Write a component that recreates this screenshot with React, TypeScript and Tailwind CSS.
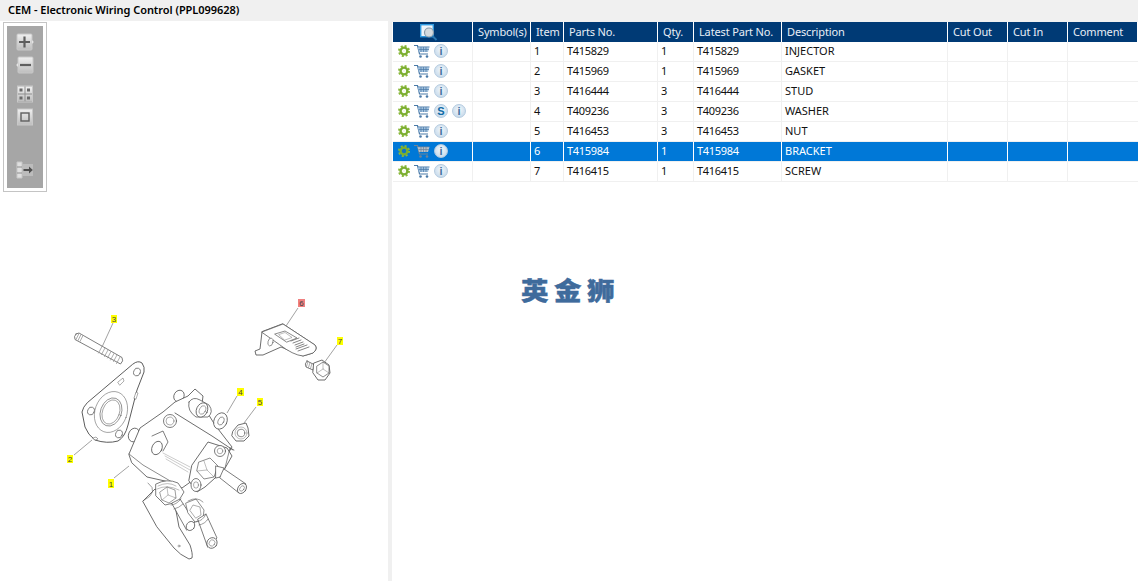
const parts = [
  { item: "1", no: "T415829", qty: "1", latest: "T415829", desc: "INJECTOR" },
  { item: "2", no: "T415969", qty: "1", latest: "T415969", desc: "GASKET" },
  { item: "3", no: "T416444", qty: "3", latest: "T416444", desc: "STUD" },
  { item: "4", no: "T409236", qty: "3", latest: "T409236", desc: "WASHER", supersede: true },
  { item: "5", no: "T416453", qty: "3", latest: "T416453", desc: "NUT" },
  { item: "6", no: "T415984", qty: "1", latest: "T415984", desc: "BRACKET", selected: true },
  { item: "7", no: "T416415", qty: "1", latest: "T416415", desc: "SCREW" },
];

const headers = ["Symbol(s)", "Item", "Parts No.", "Qty.", "Latest Part No.", "Description", "Cut Out", "Cut In", "Comment"];

function Gear({ selected }: { selected?: boolean }) {
  return (
    <svg width="12" height="12" viewBox="0 0 12 12" className="shrink-0">
      <circle cx="6" cy="6" r="5" fill="none" stroke="#8ab83a" strokeWidth="2" strokeDasharray="2 1.93" />
      <circle cx="6" cy="6" r="3.4" fill="none" stroke="#7cae30" strokeWidth="2.4" />
      <circle cx="6" cy="6" r="1.6" fill={selected ? "#1c6fb8" : "#f4f8e8"} />
    </svg>
  );
}

function Cart({ selected }: { selected?: boolean }) {
  const c = selected ? "#6f8396" : "#4a7aa8";
  return (
    <svg width="16" height="15" viewBox="0 0 16 15" className="shrink-0">
      <path d="M0 1.5h3.5l2 8.5h8.5" fill="none" stroke={c} strokeWidth="1.2" />
      <path d="M3.5 3H15.5L14 8H5z" fill={selected ? "#b5c0ca" : "#a3c2de"} />
      <path d="M3.5 2.8H15.5M4.5 5.5H15M7 3v5M9.500 3v5M12 3v5" fill="none" stroke={c} strokeWidth="0.7" />
      <circle cx="6.5" cy="12.5" r="1.3" fill={c} />
      <circle cx="13" cy="12.5" r="1.3" fill={c} />
    </svg>
  );
}

function Badge({ letter }: { letter: "i" | "S" }) {
  return (
    <span
      className={`flex h-[14px] w-[14px] shrink-0 items-center justify-center rounded-full border border-[#b4cbe0] bg-[radial-gradient(circle_at_50%_40%,#f2f7fb,#bcd3e7)] font-['Liberation_Sans',sans-serif] text-[11px] leading-none font-bold ${
        letter === "S" ? "text-[#0f6aa6]" : "text-[#40709f]"
      }`}
    >
      {letter}
    </span>
  );
}

function ZoomButton({ children, className }: { children: React.ReactNode; className?: string }) {
  return (
    <svg width="18" height="18" viewBox="0 0 18 18" className={className}>
      <defs>
        <linearGradient id="btn" x1="0" y1="0" x2="0" y2="1">
          <stop offset="0" stopColor="#f0f0f0" />
          <stop offset="1" stopColor="#bdbdbd" />
        </linearGradient>
      </defs>
      {children}
    </svg>
  );
}

function Toolbar() {
  return (
    <div className="mt-px ml-[3px] h-[170px] w-[44px] border border-[#c4c4c4] bg-white p-[3px]">
      <div className="flex h-full flex-col items-center bg-[#a6a6a6] pt-[7px]">
        <ZoomButton>
          <rect x="1" y="1" width="15" height="16" rx="1" fill="url(#btn)" stroke="#c8c8c8" />
          <path d="M16 7l1.8 2-1.8 2z" fill="#e4e4e4" />
          <path d="M8.5 3.500v11M3 9h11" stroke="#5f5f5f" strokeWidth="2.200" />
        </ZoomButton>
        <ZoomButton className="mt-[5px]">
          <rect x="2" y="1" width="15" height="16" rx="1" fill="url(#btn)" stroke="#c8c8c8" />
          <path d="M2 7L0.2 9 2 11z" fill="#e4e4e4" />
          <path d="M4 9h11" stroke="#5f5f5f" strokeWidth="2.200" />
        </ZoomButton>
        <ZoomButton className="mt-[11px]">
          <rect x="1.5" y="1" width="15" height="16" fill="#8e8e8e" stroke="#c8c8c8" />
          <path d="M2 1.500h6.500v7h-6.500zM9.500 1.500h6.500v7h-6.500zM2 9.500h6.500v7h-6.500zM9.500 9.500h6.500v7h-6.500z" fill="url(#btn)" />
          <path d="M3.500 3.500h3v3h-3zM11 3.500h3v3h-3zM3.500 11.500h3v3h-3zM11 11.500h3v3h-3z" fill="#6a6a6a" />
        </ZoomButton>
        <ZoomButton className="mt-[5px]">
          <rect x="1.5" y="1" width="15" height="16" fill="url(#btn)" stroke="#c8c8c8" />
          <rect x="5" y="5" width="8" height="8" fill="none" stroke="#5f5f5f" strokeWidth="1.4" />
        </ZoomButton>
        <ZoomButton className="mt-[35px]">
          <path d="M1 1h5v16H1z" fill="#e0e0e0" stroke="#c8c8c8" />
          <path d="M1 6h5M1 12h5" stroke="#8e8e8e" />
          <path d="M6 3h11v12H6z" fill="#bcbcbc" />
          <path d="M7.500 9h6" stroke="#4f4f4f" strokeWidth="2" />
          <path d="M13 5.500l3.800 3.500-3.800 3.500z" fill="#4f4f4f" />
        </ZoomButton>
      </div>
    </div>
  );
}

function Callout({ x, y, w, h, text, fill, x2, y2, x3, y3 }: { x: number; y: number; w: number; h: number; text: string; fill: string; x2: number; y2: number; x3: number; y3: number }) {
  return (
    <g>
      <path d={`M${x2} ${y2}L${x3} ${y3}`} stroke="#8a8a8a" strokeWidth="0.8" />
      <rect x={x} y={y} width={w} height={h} fill={fill} />
      <text x={x + w / 2} y={y + h - 1.500} textAnchor="middle" fontSize="8" fill="#444" fontFamily="'Liberation Sans', sans-serif">
        {text}
      </text>
    </g>
  );
}

function Drawing() {
  return (
    <svg width="388" height="290" viewBox="0 291 388 290" className="mt-auto block">
      <g fill="#fff" stroke="#5c5c5c" strokeWidth="0.8" strokeLinejoin="round" strokeLinecap="round">
        {/* stud */}
        <path d="M76 334L79 333L122 357.500Q124 361 120.500 364L75 339.500Q73.500 336.500 76 334Z" />
        <path d="M79 333.500l-3 6M81 334.500l-3 6M83 335.500l-3 6M102 346.500l-3.500 6.500M105 348l-3.500 6.500M108 350l-3.500 6.500M111 351.500l-3.500 6.500M114 353.500l-3.500 6.500M117 355l-3.500 6.500M120 357l-3.500 6.500" strokeWidth="0.8" stroke="#999" />
        {/* gasket */}
        <path d="M133 364Q138 360 142 363Q145 367 144 372L137 390L128 425Q125 437 118 441Q107 444 95 440Q88 435 85 427L82 412Q83 407 87 403Z" strokeWidth="1" />
        <ellipse cx="137" cy="372" rx="3.300" ry="4" transform="rotate(20 137 372)" strokeWidth="0.7" />
        <ellipse cx="91" cy="411" rx="3.300" ry="4" transform="rotate(20 91 411)" strokeWidth="0.7" />
        <ellipse cx="119" cy="434" rx="3.300" ry="4" transform="rotate(20 119 434)" strokeWidth="0.7" />
        <ellipse cx="111" cy="412" rx="16" ry="21" transform="rotate(20 111 412)" strokeWidth="0.5" />
        <ellipse cx="111" cy="412" rx="10.500" ry="14.500" transform="rotate(20 111 412)" strokeWidth="0.6" />
        <ellipse cx="111" cy="412" rx="8.500" ry="12.500" transform="rotate(20 111 412)" strokeWidth="0.5" />
        <path d="M118 382l5-4 1 3-4 4zM134 398l2-6 2 1-2 6zM93 438l3-1 2 2-3 1z" strokeWidth="0.5" />

        {/* injector body */}
        <ellipse cx="134" cy="435" rx="5.500" ry="7" transform="rotate(20 134 435)" />
        <ellipse cx="179" cy="396" rx="5" ry="6" transform="rotate(30 179 396)" />
        <path d="M129 454L140 428L163 412L175 402L188 396L195 389L203 396L202 404L215 425L232 447L218 470L196 478L182 488L165 481L147 477L132 463Z" strokeWidth="0.9" />
        <path d="M189 402Q193 396 200 400L209 405Q214 412 208 417L196 417Q187 411 189 402Z" />
        <ellipse cx="202" cy="410" rx="5.500" ry="7.500" transform="rotate(25 202 410)" />
        <ellipse cx="202.500" cy="410" rx="3" ry="4.500" transform="rotate(25 202.500 410)" strokeWidth="0.5" />
        <path d="M175 413L212 436L233 450" strokeWidth="0.9" fill="none" />
        <circle cx="170" cy="421" r="6.500" />
        <circle cx="170" cy="421" r="4" strokeWidth="0.5" />
        <path d="M152 436L163 431L168 442L163 451" fill="none" />
        <ellipse cx="157" cy="448" rx="5" ry="7" transform="rotate(25 157 448)" />
        <path d="M163 453L190 467M165 456L190 470M166 459L188 472" strokeWidth="0.5" stroke="#999" fill="none" />
        <path d="M129 454L143 465L172 482" fill="none" strokeWidth="0.7" />
        <path d="M192 465L208 442L227 448L232 456L224 470L205 487L197 492L189 481Z" strokeWidth="0.9" />
        <circle cx="220" cy="451" r="5.500" />
        <circle cx="220" cy="451" r="2.800" strokeWidth="0.5" />
        <path d="M230 448L234 450M230 448L225 468" strokeWidth="0.7" fill="none" />
        <ellipse cx="196" cy="485" rx="5" ry="6.500" />
        <ellipse cx="196" cy="485" rx="2.500" ry="3.200" strokeWidth="0.5" />
        {/* hex and rod */}
        <path d="M199 462L210 458L218 466L214 477L204 479L197 471Z" strokeWidth="0.7" />
        <path d="M204 461L207 470L214 477M207 470L197 471" strokeWidth="0.4" fill="none" />
        <path d="M216 466L224 468L224 476L216 478Z" />
        <path d="M224 469L246 484L239 493L220 478Z" />
        <ellipse cx="242" cy="488.500" rx="4" ry="5.500" transform="rotate(35 242 488.500)" />
        <ellipse cx="242" cy="488.500" rx="2" ry="3" transform="rotate(35 242 488.500)" strokeWidth="0.5" />

        {/* lower clamp plate and pipes */}
        <path d="M143 501L155 489L174 500L179 527L190 545Q193 554 192 558L189 559Q180 555 174 548L157 527Z" strokeWidth="0.9" />
        <path d="M148 483Q160 492 143 501" fill="none" strokeWidth="0.6" />
        <circle cx="179" cy="546" r="1" strokeWidth="0.5" />
        <path d="M156 484Q167 478 178 483L184 492L178 502L165 505L156 496Z" strokeWidth="0.8" />
        <path d="M158 486Q168 481 176 486M157 489Q167 484 179 490" strokeWidth="0.4" fill="none" />
        <path d="M160 492L167 487L175 490L176 498L169 503L162 500Z" strokeWidth="0.6" />
        <path d="M167 487L168 495L176 498M168 495L162 500" strokeWidth="0.4" fill="none" />
        <path d="M172 503L180 499L195 522L187 530Z" />
        <path d="M171 505Q176 505 181 499M174 509Q179 508 183 504" fill="none" strokeWidth="0.6" />
        <ellipse cx="190.500" cy="526" rx="4" ry="4.800" transform="rotate(35 190.500 526)" />
        <path d="M186 503L196 499L204 510L203 519L195 522L188 513Z" strokeWidth="0.7" />
        <path d="M188 501Q197 496 203 502" fill="none" strokeWidth="0.6" />
        <path d="M190 510L193 505L200 507L201 515L196 518Z" strokeWidth="0.5" />
        <path d="M198 519L206 514L217 538L208 547Z" />
        <path d="M196 522Q203 521 206 514M199 525Q205 524 208 519" fill="none" strokeWidth="0.6" />
        <ellipse cx="212" cy="543" rx="5" ry="5.500" transform="rotate(35 212 543)" />
        <ellipse cx="212" cy="543" rx="2.800" ry="3.300" transform="rotate(35 212 543)" strokeWidth="0.5" />

        {/* washer */}
        <ellipse cx="220.500" cy="421" rx="6.500" ry="8.500" transform="rotate(25 220.500 421)" />
        <ellipse cx="221" cy="421" rx="2.800" ry="4.200" transform="rotate(25 221 421)" strokeWidth="0.6" />
        {/* nut */}
        <path d="M233 431L238 425L246 423L248 428L249 436L244 441L236 441L232 436Z" strokeWidth="0.9" />
        <circle cx="241" cy="433" r="3.800" strokeWidth="0.7" />
        <circle cx="241" cy="433" r="6" strokeWidth="0.4" fill="none" />

        {/* bracket */}
        <path d="M262 332L260 349L255 351L256 355L263 355L281 347L303 356L313 353Q318 349 315 345L283 324Z" strokeWidth="0.9" />
        <path d="M262 332L283 324L315 345Q318 349 313 353L303 356Q293 355 280 345Z" />
        <ellipse cx="270.500" cy="342" rx="2.500" ry="4" transform="rotate(15 270.500 342)" strokeWidth="0.6" />
        <path d="M275 334L285 331L297 338L287 342Z" strokeWidth="0.7" />
        <path d="M279 334.500L285 332.500L292 337.500L285 340Z" strokeWidth="0.4" />
        <path d="M291 341L299 338M293 343L301 340M295 345L303 342M296 347L304 344" strokeWidth="0.9" stroke="#777" fill="none" />
        <path d="M296 349L307 345M298 351L309 347" strokeWidth="0.9" stroke="#777" fill="none" />

        {/* screw */}
        <path d="M307 361L315 365L313 370L306 367Q304 364 307 361Z" />
        <path d="M308 361.500l-1.500 5M310 362.500l-1.500 5M312 363.500l-1.500 5" strokeWidth="0.6" stroke="#777" />
        <path d="M314 363L322 360L329 365L330 373L325 380L318 380L313 373Z" strokeWidth="0.9" />
        <path d="M317 366L323 362L329 366L329 373L323 377L317 373Z" strokeWidth="0.7" />
        <path d="M323 362L323 369L329 373M323 369L317 373" strokeWidth="0.4" fill="none" />
      </g>

      <Callout x={111} y={315} w={6} h={8} text="3" fill="#ffff00" x2={113} y2={323} x3={102} y3={347} />
      <Callout x={67} y={455} w={6} h={8} text="2" fill="#ffff00" x2={74} y2={455} x3={92} y3={440} />
      <Callout x={108} y={479} w={6} h={9} text="1" fill="#ffff00" x2={114} y2={478} x3={129} y3={466} />
      <Callout x={237} y={388} w={7} h={8} text="4" fill="#ffff00" x2={237} y2={396} x3={227} y3={413} />
      <Callout x={257} y={398} w={6} h={8} text="5" fill="#ffff00" x2={256} y2={407} x3={244} y3={423} />
      <Callout x={298} y={299} w={7} h={8} text="6" fill="#f08080" x2={298} y2={308} x3={286} y3={326} />
      <Callout x={337} y={337} w={6} h={8} text="7" fill="#ffff00" x2={337} y2={345} x3={324} y3={363} />
    </svg>
  );
}

function HeaderSearchIcon() {
  return (
    <svg width="18" height="17" viewBox="0 0 18 17">
      <rect x="0.700" y="0.700" width="12.600" height="12" fill="#eef4f9" stroke="#2f9ae0" strokeWidth="1.400" />
      <circle cx="9" cy="8.500" r="4.500" fill="#d4dade" stroke="#8a9aa8" strokeWidth="1.200" />
      <path d="M12.500 12l4 4" stroke="#2a77b0" strokeWidth="1.800" />
    </svg>
  );
}

export default function App() {
  return (
    <div className="flex h-[581px] w-[1138px] flex-col overflow-hidden bg-[#f0f0f0] font-['Noto_Sans',sans-serif] text-[11px] text-[#111]">
      <div className="flex h-[21px] shrink-0 items-center pl-2 text-[11px] font-semibold tracking-[-0.05px] text-black">
        CEM - Electronic Wiring Control (PPL099628)
      </div>
      <div className="flex min-h-0 flex-1">
        <div className="flex w-[388px] flex-col bg-white">
          <Toolbar />
          <Drawing />
        </div>
        <div className="mt-px ml-1 flex-1 bg-white pl-px">
          <div className="grid grid-cols-[80px_58px_33px_94px_36px_88px_166px_60px_60px_70px] leading-none">
            <div className="flex h-5 items-center justify-center border-r border-white bg-[#003a75] pr-[8px]">
              <HeaderSearchIcon />
            </div>
            {headers.map((h) => (
              <div key={h} className="flex h-5 items-center border-r border-white bg-[#003a75] pb-[2px] pl-[5px] tracking-[-0.15px] whitespace-nowrap text-[#e8eef5] last:border-r-0">
                {h}
              </div>
            ))}
            {parts.map((p) => {
              const cell = p.selected
                ? "flex h-5 items-center border-r border-b border-r-white border-b-[#f0f0f0] bg-[#0078d7] text-white"
                : "flex h-5 items-center border-r border-b border-[#f0f0f0] bg-white";
              const text = `${cell} pb-[2px] pl-[3px]`;
              return [
                <div key={p.item + "a"} className={`${cell} gap-[4px] pb-px pl-[5px]`}>
                  <Gear selected={p.selected} />
                  <Cart selected={p.selected} />
                  {p.supersede && <Badge letter="S" />}
                  <Badge letter="i" />
                </div>,
                <div key={p.item + "b"} className={cell} />,
                <div key={p.item + "c"} className={text}>{p.item}</div>,
                <div key={p.item + "d"} className={`${text} tracking-[-0.3px]`}>{p.no}</div>,
                <div key={p.item + "e"} className={text}>{p.qty}</div>,
                <div key={p.item + "f"} className={`${text} tracking-[-0.3px]`}>{p.latest}</div>,
                <div key={p.item + "g"} className={text}>{p.desc}</div>,
                <div key={p.item + "h"} className={cell} />,
                <div key={p.item + "i"} className={cell} />,
                <div key={p.item + "j"} className={`${cell} border-r-0`} />,
              ];
            })}
          </div>
          <div className="mt-[89px] ml-[128px] origin-left scale-x-110 font-['Noto_Sans_CJK_SC',sans-serif] text-[25px] leading-[36px] font-black tracking-[5px] text-[#3f6b9c] [-webkit-text-stroke:0.4px_#3f6b9c]">
            英金狮
          </div>
        </div>
      </div>
    </div>
  );
}
